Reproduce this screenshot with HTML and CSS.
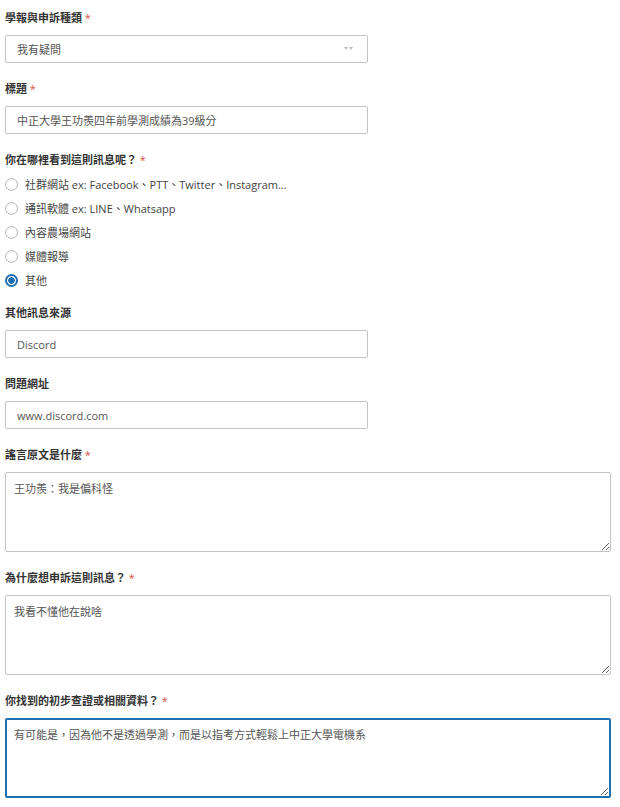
FILE: index.html
```html
<!DOCTYPE html>
<html lang="zh-Hant">
<head>
  <meta charset="UTF-8">
  <meta name="viewport" content="width=device-width, initial-scale=1.0">
  <title>申訴表單</title>
  <link rel="stylesheet" href="styles.css">
</head>
<body>
  <form class="report-form">
    <div class="field">
      <label class="field-label">學報與申訴種類 <span class="req">*</span></label>
      <div class="select">
        <span>我有疑問</span>
        <svg class="select-arrow" width="9" height="4" viewBox="0 0 9 4">
          <path d="M0 0h4L2 3z M5 0h4L7 3z" fill="#bdbdbd"/>
        </svg>
      </div>
    </div>

    <div class="field">
      <label class="field-label">標題 <span class="req">*</span></label>
      <input class="text-input" type="text" value="中正大學王功羨四年前學測成績為39級分">
    </div>

    <div class="field field-radios">
      <label class="field-label">你在哪裡看到這則訊息呢？ <span class="req">*</span></label>
      <ul class="radio-list">
        <li class="radio"><span class="radio-dot"></span>社群網站 ex: Facebook、PTT、Twitter、Instagram...</li>
        <li class="radio"><span class="radio-dot"></span>通訊軟體 ex: LINE、Whatsapp</li>
        <li class="radio"><span class="radio-dot"></span>內容農場網站</li>
        <li class="radio"><span class="radio-dot"></span>媒體報導</li>
        <li class="radio checked"><span class="radio-dot"></span>其他</li>
      </ul>
    </div>

    <div class="field">
      <label class="field-label">其他訊息來源</label>
      <input class="text-input" type="text" value="Discord">
    </div>

    <div class="field">
      <label class="field-label">問題網址</label>
      <input class="text-input" type="text" value="www.discord.com">
    </div>

    <div class="field">
      <label class="field-label">謠言原文是什麼 <span class="req">*</span></label>
      <textarea class="text-area">王功羨：我是偏科怪</textarea>
    </div>

    <div class="field">
      <label class="field-label">為什麼想申訴這則訊息？ <span class="req">*</span></label>
      <textarea class="text-area">我看不懂他在說啥</textarea>
    </div>

    <div class="field">
      <label class="field-label">你找到的初步查證或相關資料？ <span class="req">*</span></label>
      <textarea class="text-area focused">有可能是，因為他不是透過學測，而是以指考方式輕鬆上中正大學電機系</textarea>
    </div>
  </form>
</body>
</html>
```

FILE: styles.css
```css
* {
  box-sizing: border-box;
}
body {
  margin: 0;
  padding: 9px 10px 0 5px;
  font-family: "Open Sans", "Noto Sans CJK TC", sans-serif;
  font-size: 11px;
  color: #444;
  background: #fff;
}
.field {
  margin-bottom: 17px;
}
.field-label {
  display: block;
  font-weight: bold;
  color: #333;
  line-height: 18px;
  margin-bottom: 8px;
}
.req {
  color: #d9534f;
  font-weight: normal;
}
.select,
.text-input {
  width: 363px;
  height: 28px;
  border: 1px solid #c4c4c4;
  border-radius: 2px;
  padding: 0 11px;
  font: inherit;
  color: #555;
  background: #fff;
}
.select {
  display: flex;
  align-items: center;
  justify-content: space-between;
}
.select-arrow {
  margin-right: 3px;
}
.text-input {
  display: block;
}
.text-area {
  display: block;
  width: 606px;
  height: 80px;
  border: 1px solid #c4c4c4;
  border-radius: 2px;
  padding: 7px 8px;
  font: inherit;
  line-height: 18px;
  color: #555;
  resize: vertical;
}
.text-area.focused {
  border: 2px solid #1f6fb2;
  padding: 6px 7px;
  outline: none;
}
.field-radios {
  margin-bottom: 12px;
}
.field-radios .field-label {
  margin-bottom: 3px;
}
.radio-list {
  list-style: none;
  margin: 0;
  padding: 0;
}
.radio {
  display: flex;
  align-items: center;
  height: 24px;
  color: #444;
}
.radio-dot {
  width: 13px;
  height: 13px;
  border: 1px solid #b5b5b5;
  border-radius: 50%;
  margin-right: 7px;
  flex-shrink: 0;
}
.radio.checked .radio-dot {
  border: 2px solid #1f6fb2;
  background: radial-gradient(circle, #1f6fb2 0 3px, #fff 3.5px);
}
```
